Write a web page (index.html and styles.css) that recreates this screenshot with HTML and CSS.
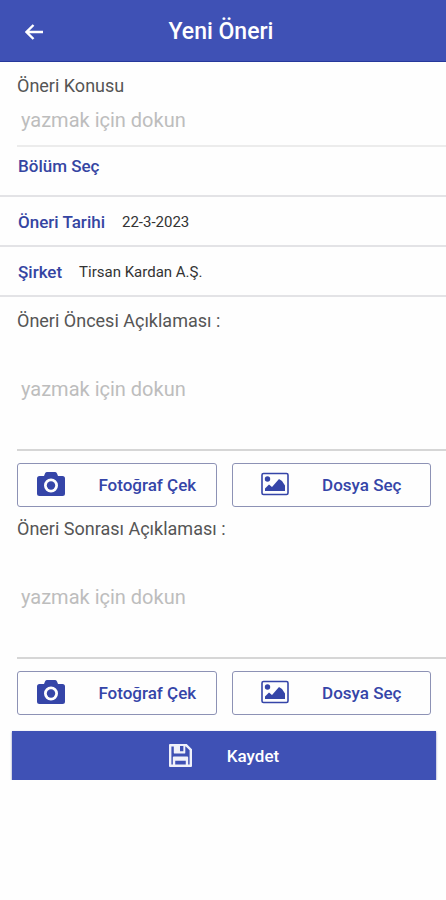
FILE: index.html
```html
<!DOCTYPE html>
<html lang="tr">
<head>
<meta charset="utf-8">
<meta name="viewport" content="width=device-width, initial-scale=1">
<title>Yeni Öneri</title>
<link rel="stylesheet" href="styles.css">
</head>
<body>
<svg class="sprite" aria-hidden="true">
  <symbol id="camera" viewBox="0 0 28 24">
    <path fill-rule="evenodd" d="M10 0h8a2 2 0 0 1 2 1.500L21 4h4.500A2.500 2.500 0 0 1 28 6.500v15a2.500 2.500 0 0 1-2.500 2.500h-23A2.500 2.500 0 0 1 0 21.500v-15A2.500 2.500 0 0 1 2.500 4H7l1-2.500A2 2 0 0 1 10 0zM14 6.500a7 7 0 1 0 0 14 7 7 0 0 0 0-14z"/>
    <circle cx="14" cy="13.500" r="4.200"/>
  </symbol>
  <symbol id="image" viewBox="0 0 28 24">
    <rect x="1" y="1.500" width="26" height="21" rx="1.500" fill="none" stroke="currentColor" stroke-width="1.600"/>
    <circle cx="6.500" cy="7" r="2.700"/>
    <path d="M4 19v-2.500l4-4 3 2.500 7-8 3 2 3 4.500V19z"/>
  </symbol>
  <symbol id="save" viewBox="0 0 24 24">
    <path fill-rule="evenodd" d="M1 0h17.500L24 5.500V23a1 1 0 0 1-1 1H1a1 1 0 0 1-1-1V1a1 1 0 0 1 1-1zM2.500 2.500v19H4V14a1 1 0 0 1 1-1h14a1 1 0 0 1 1 1v7.500h1.500v-15l-4-4H17V9a1 1 0 0 1-1 1H6a1 1 0 0 1-1-1V2.500zM11.500 2v5.500H15V2zM6.500 17.500v4h11v-4z"/>
  </symbol>
</svg>

<header class="topbar">
  <button class="back" type="button" aria-label="Geri">
    <svg viewBox="0 0 18 16"><path d="M8.500 1 1.500 8l7 7M2 8h16"/></svg>
  </button>
  <h1 class="title">Yeni Öneri</h1>
</header>

<form class="form">
  <div class="field">
    <label class="label" for="subject">Öneri Konusu</label>
    <input class="subject" id="subject" type="text" placeholder="yazmak için dokun">
  </div>

  <div class="row row-select"><button class="link" type="button">Bölüm Seç</button></div>
  <div class="row"><button class="link" type="button">Öneri Tarihi</button><span class="value">22-3-2023</span></div>
  <div class="row"><button class="link" type="button">Şirket</button><span class="value">Tirsan Kardan A.Ş.</span></div>

  <section class="field">
    <label class="label" for="before">Öneri Öncesi Açıklaması :</label>
    <textarea class="description" id="before" placeholder="yazmak için dokun"></textarea>
    <div class="actions">
      <button class="outline" type="button"><svg class="icon"><use href="#camera"/></svg><span class="caption">Fotoğraf Çek</span></button>
      <button class="outline" type="button"><svg class="icon"><use href="#image"/></svg><span class="caption">Dosya Seç</span></button>
    </div>
  </section>

  <section class="field">
    <label class="label" for="after">Öneri Sonrası Açıklaması :</label>
    <textarea class="description" id="after" placeholder="yazmak için dokun"></textarea>
    <div class="actions">
      <button class="outline" type="button"><svg class="icon"><use href="#camera"/></svg><span class="caption">Fotoğraf Çek</span></button>
      <button class="outline" type="button"><svg class="icon"><use href="#image"/></svg><span class="caption">Dosya Seç</span></button>
    </div>
  </section>

  <button class="save" type="button"><svg class="save-icon"><use href="#save"/></svg><span>Kaydet</span></button>
</form>
</body>
</html>
```
FILE: styles.css
```css
* { box-sizing: border-box; }

body {
  margin: 0;
  background: #fefefe;
  color: #555;
  font-family: Roboto, "Liberation Sans", sans-serif;
}

button, input, textarea {
  margin: 0;
  padding: 0;
  border: 0;
  border-radius: 0;
  background: none;
  font-family: inherit;
}

.sprite { display: none; }

.topbar {
  display: grid;
  grid-template-columns: 68px 1fr 72px;
  align-items: center;
  height: 62px;
  padding-top: 3px;
  border-bottom: 1px solid #26389b;
  background: #3f51b5;
  color: #fff;
}

.back {
  display: flex;
  align-items: center;
  height: 48px;
  padding-left: 25px;
  color: inherit;
}

.back svg {
  width: 18px;
  height: 16px;
  fill: none;
  stroke: currentColor;
  stroke-width: 2.4;
}

.title {
  margin: 0;
  font-size: 23px;
  line-height: 28px;
  font-weight: 500;
  text-align: center;
}

.field { padding: 12px 0 0 17px; }
.field + .field { padding-top: 10px; }

.label {
  display: block;
  font-size: 18px;
  line-height: 24px;
}

.subject, .description {
  display: block;
  width: 100%;
  padding-left: 4px;
  font-size: 20px;
  line-height: 24px;
  color: #444;
}

.subject {
  height: 49px;
  padding-bottom: 4px;
  border-bottom: 2px solid #ececec;
}

.description {
  height: 118px;
  padding-top: 44px;
  border-bottom: 2px solid #d6d6d6;
  resize: none;
}

::placeholder { color: #bdbdbd; opacity: 1; }

.row {
  display: flex;
  align-items: center;
  gap: 17px;
  height: 50px;
  padding: 2px 18px 0;
  border-bottom: 2px solid #e3e3e6;
}

.row-select { padding-bottom: 12px; }

.link {
  color: #3545a2;
  font-size: 17px;
  line-height: 24px;
  font-weight: 500;
}

.value {
  color: #333;
  font-size: 15px;
  line-height: 24px;
}

.actions {
  display: grid;
  grid-template-columns: 1fr 1fr;
  gap: 15px;
  margin-top: 12px;
  padding-right: 15px;
}

.outline {
  display: flex;
  align-items: center;
  height: 44px;
  padding-left: 19px;
  border: 1px solid #8d92b5;
  border-radius: 3px;
  color: #3545a8;
}

.icon {
  flex: none;
  width: 28px;
  height: 24px;
  margin: 0 14px 2px 0;
  fill: currentColor;
}

.caption {
  flex: 1;
  font-size: 17px;
  line-height: 24px;
  font-weight: 500;
  text-align: center;
}

.outline + .outline .icon { margin-left: 9px; margin-right: 5px; }

.save {
  display: flex;
  align-items: center;
  justify-content: center;
  gap: 35px;
  width: calc(100% - 22px);
  height: 49px;
  margin: 16px 10px 0 12px;
  background: #3f51b5;
  box-shadow: 0 1px 2px #7c84b5;
  color: #fff;
  font-size: 17px;
  line-height: 24px;
  font-weight: 500;
}

.save-icon {
  width: 23px;
  height: 23px;
  fill: #f0f1fa;
}
```
